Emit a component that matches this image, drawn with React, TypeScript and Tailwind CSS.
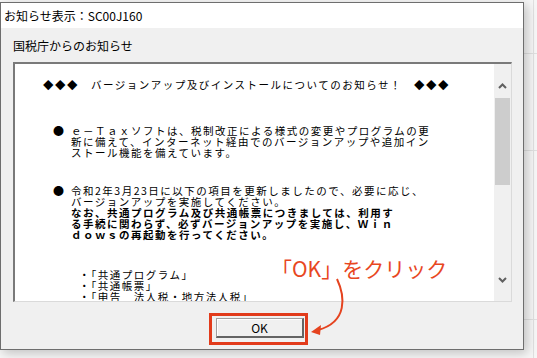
export default function App() {
  return (
    <div className="relative h-[358px] w-[537px] overflow-hidden bg-[#f6f6f6] font-['Noto_Sans_CJK_JP',sans-serif] text-black">
      {/* sheet behind the dialog */}
      <div className="absolute left-[533px] top-0 h-full w-px bg-[#e0e0e0]" />
      <div className="absolute left-0 top-[53px] h-px w-full bg-[#e0e0e0]" />
      <div className="absolute left-0 top-[150px] h-px w-full bg-[#e0e0e0]" />
      <div className="absolute left-0 top-[319px] h-px w-full bg-[#e0e0e0]" />

      <div className="relative mt-[2px] h-[348px] w-[524px] border border-[#6e6e6e] bg-[#f0f0f0] shadow-[3px_3px_10px_rgba(0,0,0,0.22)]">
        <div className="h-[25px] bg-white pl-[3px] text-[12px] leading-[25px]">お知らせ表示：SC00J160</div>
        <div className="pl-[12px] pt-[11px] text-[12px] leading-[14px]">国税庁からのお知らせ</div>

        <div className="ml-[12px] mt-[9px] flex h-[240px] w-[499px] border-b border-l-2 border-r border-t-2 border-b-[#dadada] border-l-[#7a7a7a] border-r-[#dadada] border-t-[#7a7a7a] bg-white">
          <div className="flex-1 overflow-hidden whitespace-nowrap pt-[15px] text-[10.5px] leading-[11px] tracking-[1.5px]">
            <div className="pl-[28px]">◆◆◆　バージョンアップ及びインストールについてのお知らせ！　◆◆◆</div>

            <div className="mt-[35px] flex pl-[38px]">
              <span className="w-[18px] text-[11px]">●</span>
              <div>
                <div>ｅ－Ｔａｘソフトは、税制改正による様式の変更やプログラムの更</div>
                <div>新に備えて、インターネット経由でのバージョンアップや追加イン</div>
                <div>ストール機能を備えています。</div>
              </div>
            </div>

            <div className="mt-[27px] flex pl-[38px]">
              <span className="w-[18px] text-[11px]">●</span>
              <div>
                <div>令和2年3月23日に以下の項目を更新しましたので、必要に応じ、</div>
                <div>バージョンアップを実施してください。</div>
                <div className="font-bold">なお、共通プログラム及び共通帳票につきましては、利用す</div>
                <div className="font-bold">る手続に関わらず、必ずバージョンアップを実施し、Ｗｉｎ</div>
                <div className="font-bold">ｄｏｗｓの再起動を行ってください。</div>
              </div>
            </div>

            <div className="mt-[29px] pl-[64px]">
              <div>・「共通プログラム」</div>
              <div>・「共通帳票」</div>
              <div>・「申告　法人税・地方法人税」</div>
            </div>
          </div>

          <div className="flex w-[17px] flex-col bg-[#f0f0f0]">
            <div className="flex h-[34px] items-end justify-center pb-[9px]">
              <svg width="9" height="6" viewBox="0 0 9 6">
                <path d="M1 5 L4.5 1.5 L8 5" fill="none" stroke="#606060" strokeWidth="2" />
              </svg>
            </div>
            <div className="mx-[1px] h-[87px] bg-[#cdcdcd]" />
            <div className="flex-1" />
            <div className="flex justify-center pb-[18px]">
              <svg width="9" height="6" viewBox="0 0 9 6">
                <path d="M1 1 L4.5 4.5 L8 1" fill="none" stroke="#606060" strokeWidth="2" />
              </svg>
            </div>
          </div>
        </div>

        <button className="ml-[215px] mt-[16px] block h-[20px] w-[88px] border-b-2 border-l border-r-2 border-t border-b-[#646464] border-l-[#a0a0a0] border-r-[#646464] border-t-[#a0a0a0] bg-[#f0f0f0] text-[12px] leading-[16px] shadow-[inset_1px_1px_0_#ffffff]">
          OK
        </button>
      </div>

      {/* annotation */}
      <div className="absolute left-[271px] top-[254px] text-[21px] leading-[28px] text-[#e8471f]">「OK」をクリック</div>
      <svg className="absolute left-0 top-0" width="537" height="358" viewBox="0 0 537 358">
        <path d="M337 279 C345 296 348 322 318 330" fill="none" stroke="#e5431f" strokeWidth="2" />
        <path d="M311 332 L321 325 L320 335 Z" fill="#e5431f" />
      </svg>
      <div className="absolute left-[209px] top-[313px] h-[32px] w-[99px] border-[3px] border-[#e23b1b]" />
    </div>
  );
}
